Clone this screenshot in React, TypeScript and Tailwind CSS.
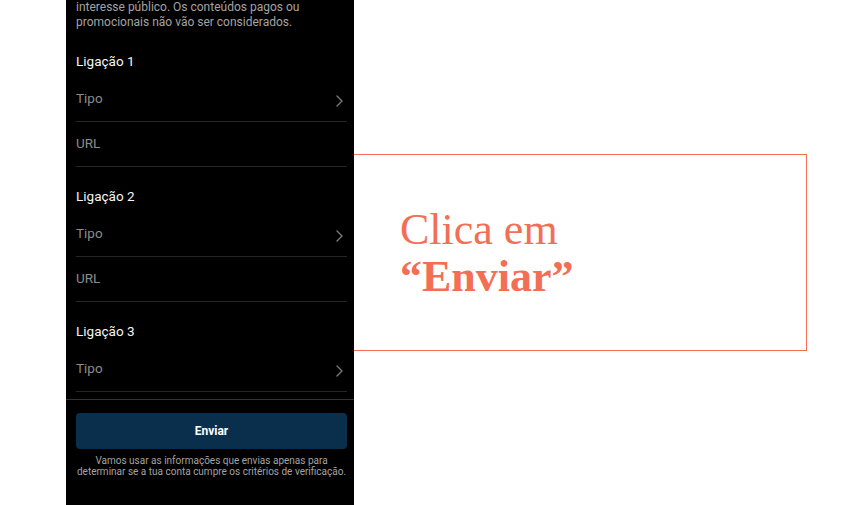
import React from "react";

const groups = ["Ligação 1", "Ligação 2", "Ligação 3"];

function Chevron() {
  return (
    <svg width="7" height="12" viewBox="0 0 7 12" fill="none" className="mt-[4px]">
      <path d="M1 1l5 5-5 5" stroke="#7a7a7a" strokeWidth="1.4" strokeLinecap="round" strokeLinejoin="round" />
    </svg>
  );
}

function LinkGroup({ title, first, last }: { title: string; first: boolean; last: boolean }) {
  return (
    <div className={first ? "pt-[16px]" : "pt-[13px]"}>
      <div className="h-[32px] flex items-center text-[13.5px] text-[#f5f5f5]">{title}</div>
      <div className="h-[45px] flex items-center justify-between pr-[4px] border-b border-[#262626] text-[13.5px] text-[#8c8c8c]">
        <span className="-mt-[1px]">Tipo</span>
        <Chevron />
      </div>
      {!last && (
        <div className="h-[45px] flex items-center border-b border-[#262626] text-[13.5px] text-[#8c8c8c]">
          <span className="-mt-[1px]">URL</span>
        </div>
      )}
    </div>
  );
}

export default function App() {
  return (
    <div className="w-[850px] h-[505px] bg-white flex overflow-hidden">
      <div
        className="ml-[66px] w-[288px] h-[505px] bg-black flex flex-col shrink-0"
        style={{ fontFamily: "Roboto, 'Noto Sans', sans-serif" }}
      >
        <div className="h-[399px] overflow-hidden pl-[10px] pr-[7px]">
          <p className="text-[12px] leading-[14.5px] text-[#a3a3a3]">
            interesse público. Os conteúdos pagos ou
            <br />
            promocionais não vão ser considerados.
          </p>
          {groups.map((g, i) => (
            <LinkGroup key={g} title={g} first={i === 0} last={i === groups.length - 1} />
          ))}
        </div>
        <div className="border-t border-[#333333] pl-[10px] pr-[7px] pt-[13px]">
          <button className="w-full h-[36px] rounded-[4px] bg-[#0a2f4c] text-white text-[12px] font-bold">
            Enviar
          </button>
          <p className="mt-[6px] text-center text-[10px] leading-[11px] text-[#a3a3a3]">
            Vamos usar as informações que envias apenas para
            <br />
            determinar se a tua conta cumpre os critérios de verificação.
          </p>
        </div>
      </div>
      <div className="mt-[154px] w-[453px] h-[197px] border-y border-r border-[#f26f55] flex items-center pl-[46px] shrink-0">
        <div
          className="text-[44px] leading-[47px] text-[#f26f55]"
          style={{ fontFamily: "'Liberation Serif', serif" }}
        >
          <div>Clica em</div>
          <div className="font-bold">“Enviar”</div>
        </div>
      </div>
    </div>
  );
}
